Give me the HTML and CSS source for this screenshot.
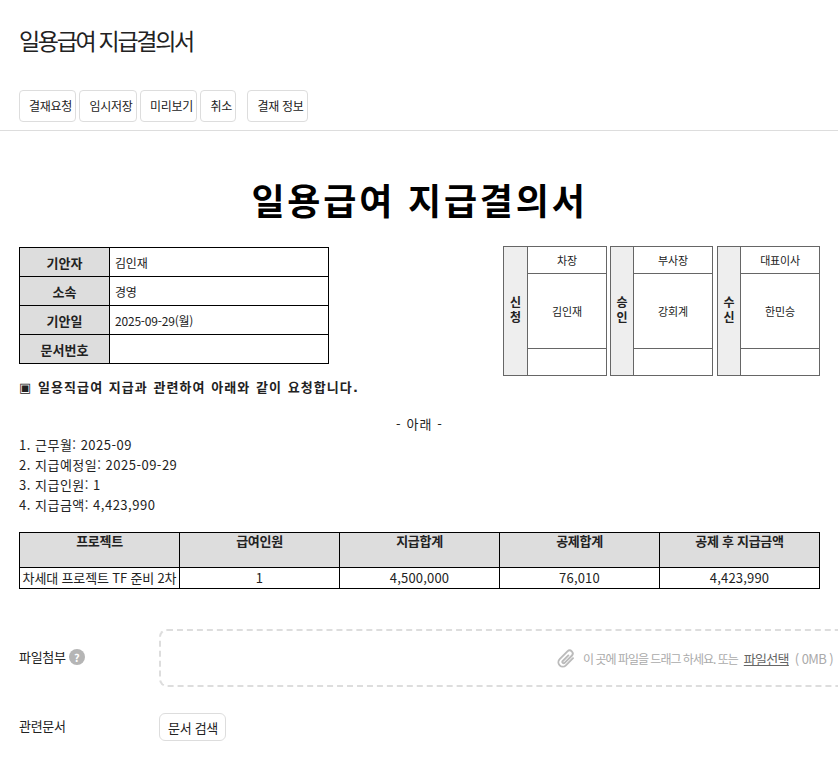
FILE: index.html
```html
<!DOCTYPE html>
<html lang="ko">
<head>
<meta charset="utf-8">
<title>일용급여 지급결의서</title>
<link rel="stylesheet" href="styles.css">
</head>
<body>
<header class="top">
  <h1 class="page-title">일용급여 지급결의서</h1>
  <div class="toolbar">
    <button class="btn">결재요청</button>
    <button class="btn">임시저장</button>
    <button class="btn">미리보기</button>
    <button class="btn">취소</button>
    <button class="btn info">결재 정보</button>
  </div>
</header>
<main class="doc">
  <h2 class="doc-title">일용급여 지급결의서</h2>
  <div class="head-row">
    <table class="meta">
      <tr><th>기안자</th><td>김인재</td></tr>
      <tr><th>소속</th><td>경영</td></tr>
      <tr><th>기안일</th><td>2025-09-29(월)</td></tr>
      <tr><th>문서번호</th><td></td></tr>
    </table>
    <div class="approvals">
      <table class="sign"><tr><th rowspan="3">신<br>청</th><td class="r1">차장</td></tr><tr><td class="r2">김인재</td></tr><tr><td class="r3"></td></tr></table>
      <table class="sign"><tr><th rowspan="3">승<br>인</th><td class="r1">부사장</td></tr><tr><td class="r2">강회계</td></tr><tr><td class="r3"></td></tr></table>
      <table class="sign"><tr><th rowspan="3">수<br>신</th><td class="r1">대표이사</td></tr><tr><td class="r2">한민승</td></tr><tr><td class="r3"></td></tr></table>
    </div>
  </div>
  <p class="lead">▣ 일용직급여 지급과 관련하여 아래와 같이 요청합니다.</p>
  <p class="below">- 아래 -</p>
  <ol class="facts">
    <li>1. 근무월: 2025-09</li>
    <li>2. 지급예정일: 2025-09-29</li>
    <li>3. 지급인원: 1</li>
    <li>4. 지급금액: 4,423,990</li>
  </ol>
  <table class="pay">
    <tr><th>프로젝트</th><th>급여인원</th><th>지급합계</th><th>공제합계</th><th>공제 후 지급금액</th></tr>
    <tr><td class="name">차세대 프로젝트 TF 준비 2차</td><td>1</td><td>4,500,000</td><td>76,010</td><td>4,423,990</td></tr>
  </table>
</main>
<section class="form-row attach">
  <div class="label">파일첨부<span class="help">?</span></div>
  <div class="drop">
    <svg class="clip" width="21" height="21" viewBox="0 0 24 24" fill="none" stroke="#bbb" stroke-width="2.2" stroke-linecap="round" stroke-linejoin="round"><g transform="rotate(45 12 12)"><path d="M17 6.5v11.5a5 5 0 0 1-10 0V5.5a3.5 3.5 0 0 1 7 0v11.5a1.5 1.5 0 0 1-3 0V8"/></g></svg>
    <span class="drop-text">이 곳에 파일을 드래그 하세요. 또는</span>
    <a class="pick">파일선택</a>
    <span class="size">( 0MB )</span>
  </div>
</section>
<section class="form-row related">
  <div class="label">관련문서</div>
  <button class="btn search">문서 검색</button>
</section>
</body>
</html>
```
FILE: styles.css
```css
html, body { margin: 0; padding: 0; }
body {
  width: 838px;
  height: 784px;
  overflow: hidden;
  background: #fff;
  color: #222;
  font-family: "Noto Sans CJK KR", "Noto Sans", sans-serif;
  font-size: 12px;
}
table { border-collapse: collapse; }
.top { padding: 0 19px; height: 130px; border-bottom: 1px solid #ddd; }
.page-title {
  margin: 0;
  padding-top: 23px;
  height: 67px;
  font-size: 23px;
  line-height: 35px;
  font-weight: 400;
  letter-spacing: -2.3px;
  color: #222;
}
.toolbar { display: flex; align-items: center; }
.btn {
  height: 32px;
  padding: 0 3.5px 0 9px;
  border: 1px solid #ddd;
  border-radius: 4px;
  background: #fff;
  color: #222;
  font: 12px/1 "Noto Sans CJK KR", sans-serif;
  letter-spacing: -0.3px;
  margin-right: 3px;
}
.btn.info { margin-left: 8px; }
.doc { padding: 0 18px 0 19px; }
.doc-title {
  margin: 0;
  padding-top: 42px;
  height: 73px;
  text-align: center;
  font-size: 36px;
  line-height: 52px;
  font-weight: 700;
  color: #000;
  letter-spacing: 2.8px;
}
.head-row { display: flex; justify-content: space-between; align-items: flex-start; }
.meta { margin-top: 1px; width: 310px; table-layout: fixed; }
.meta th, .meta td { border: 1px solid #000; height: 28px; padding: 0; font-size: 12px; color: #222; }
.meta th { width: 89px; background: #ddd; font-size: 13px; font-weight: 700; }
.meta td { padding-left: 5px; letter-spacing: -0.2px; }
.approvals { display: flex; gap: 3px; }
.sign { width: 103px; table-layout: fixed; }
.sign:first-child { width: 104px; }
.sign:last-child { margin-left: 1px; }
.sign th, .sign td { border: 1px solid #666; padding: 0; text-align: center; font-size: 11px; letter-spacing: -0.2px; color: #222; }
.sign th { width: 22px; background: #eee; font-family: "Liberation Sans", "Noto Sans CJK KR", sans-serif; font-size: 12px; line-height: 15px; font-weight: 700; letter-spacing: 0; }
.sign:first-child th { width: 23px; }
.sign .r1 { height: 26px; }
.sign .r2 { height: 74px; }
.sign .r3 { height: 26px; }
.lead { margin: 2px 0 0; font-size: 13px; line-height: 19px; font-weight: 700; letter-spacing: 1.08px; font-family: "DejaVu Sans", "Noto Sans CJK KR", sans-serif; }
.below { margin: 17px 0 0; text-align: center; font-size: 13px; line-height: 20px; letter-spacing: 1.1px; }
.facts { list-style: none; margin: 1px 0 0; padding: 0; font-size: 13px; line-height: 20px; letter-spacing: 0.5px; }
.pay { margin-top: 17px; width: 801px; table-layout: fixed; }
.pay th, .pay td { border: 1px solid #000; padding: 0; text-align: center; font-size: 13px; }
.pay th { height: 34px; background: #ddd; vertical-align: top; line-height: 16px; font-weight: 700; letter-spacing: -0.3px; }
.pay td { height: 20px; line-height: 20px; letter-spacing: 0.2px; white-space: nowrap; }
.pay td.name { letter-spacing: -0.15px; }
.form-row { display: flex; padding-left: 19px; align-items: center; }
.label { flex: none; width: 140px; font-size: 13px; letter-spacing: -0.3px; display: flex; align-items: center; gap: 3px; margin-bottom: 3px; }
.help { width: 16px; height: 16px; border-radius: 50%; background: #b5b5b5; color: #fff; font-size: 11px; font-weight: 700; text-align: center; line-height: 16px; }
.attach { margin-top: 40px; }
.drop {
  flex: none;
  box-sizing: border-box;
  width: 700px;
  height: 58px;
  border: 2px dashed #ddd;
  border-radius: 8px;
  display: flex;
  align-items: center;
  justify-content: flex-end;
  gap: 6px;
  padding-right: 24px;
}
.clip { margin-right: 0; }
.drop-text { font-size: 12px; color: #aaa; letter-spacing: -1px; }
.pick { color: #666; text-decoration: underline; font-size: 13px; letter-spacing: -0.7px; }
.size { font-size: 13px; color: #aaa; letter-spacing: -0.6px; }
.related { margin-top: 26px; }
.search { height: 28px; padding: 0 7px 0 8px; border-radius: 6px; font-size: 13px; margin: 0; }
```
